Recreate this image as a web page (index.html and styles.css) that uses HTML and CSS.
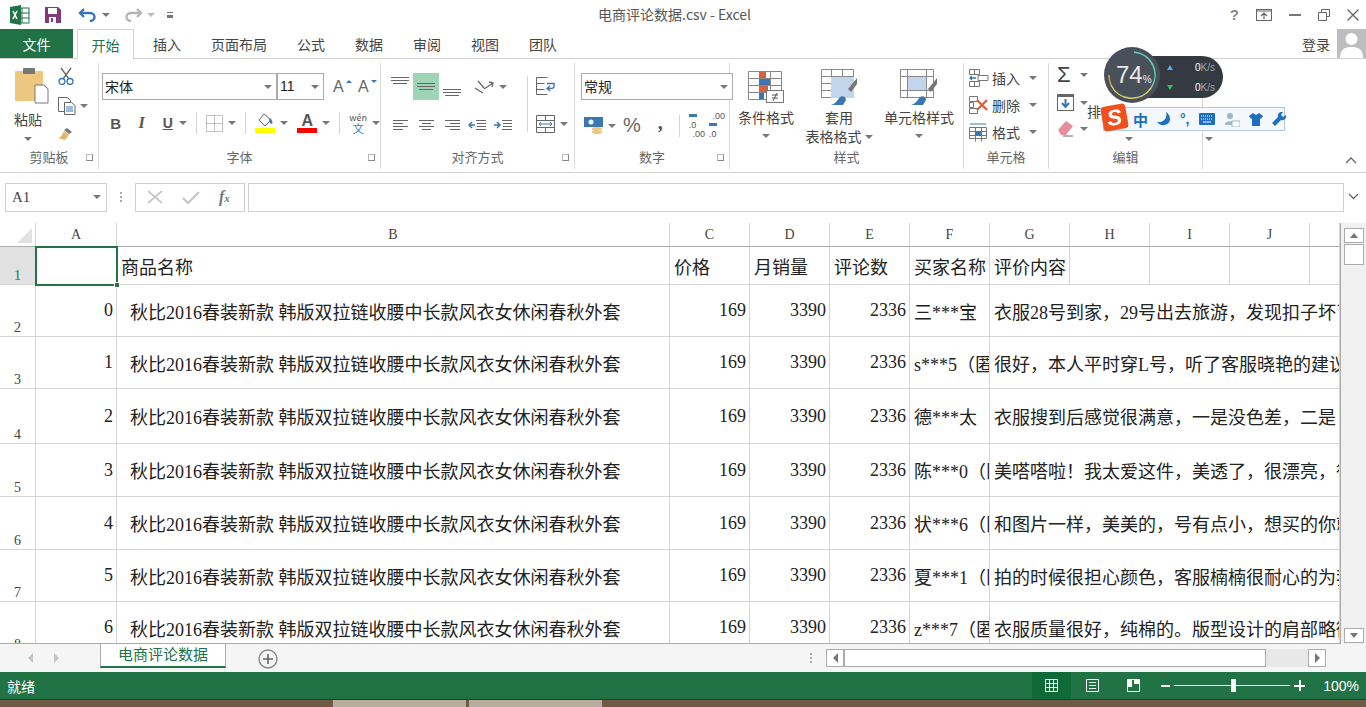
FILE: index.html
```html
<!DOCTYPE html>
<html lang="zh-CN">
<head>
    <meta charset="UTF-8">
    <title>电商评论数据.csv - Excel</title>
    <link rel="stylesheet" href="styles.css">
</head>
<body>
<div class="app">
    <div class="titlebar">
        <div class="qat">
            <svg class="ic" width="22" height="22" viewBox="0 0 22 22"><rect x="8" y="4" width="12" height="15" fill="#fff" stroke="#217346"/><path d="M13 4v15M8 9h12M8 14h12" stroke="#217346"/><path d="M1 3l11-2v20L1 19z" fill="#217346"/><path d="M4 7l4 8M8 7l-4 8" stroke="#fff" stroke-width="1.6"/></svg>
            <svg class="ic save" width="16" height="16" viewBox="0 0 16 16"><path d="M0 0h13l3 3v13H0z" fill="#80397b"/><rect x="3" y="1" width="9" height="6" fill="#fff"/><rect x="4" y="10" width="7" height="6" fill="#fff"/><rect x="6" y="11" width="2" height="4" fill="#80397b"/></svg>
            <svg class="ic undo" width="20" height="14" viewBox="0 0 20 14"><path d="M6 1L2 5l4 4" fill="none" stroke="#3a78b5" stroke-width="2.4"/><path d="M3 5h9c6 0 6 8 0 8" fill="none" stroke="#3a78b5" stroke-width="2.4"/></svg>
            <span class="caret"></span>
            <svg class="ic redo" width="20" height="14" viewBox="0 0 20 14"><path d="M14 1l4 4-4 4" fill="none" stroke="#b4b4b4" stroke-width="2.4"/><path d="M17 5H8c-6 0-6 8 0 8" fill="none" stroke="#b4b4b4" stroke-width="2.4"/></svg>
            <span class="caret light"></span>
            <span class="qat-more"></span>
        </div>
        <div class="title">电商评论数据.csv - Excel</div>
        <div class="winbtns">
            <span class="help">?</span>
            <svg width="16" height="12" viewBox="0 0 16 12"><rect x=".5" y=".5" width="15" height="11" fill="none" stroke="#666"/><path d="M1 2h14M8 10V4M5 7l3-3 3 3" fill="none" stroke="#666" stroke-width="1.2"/></svg>
            <svg width="12" height="2" viewBox="0 0 12 2"><rect width="12" height="2" fill="#777"/></svg>
            <svg width="12" height="12" viewBox="0 0 12 12"><path d="M3.500 3V.5h8v7H9M.5 3.500h8v8h-8z" fill="none" stroke="#666"/></svg>
            <svg width="12" height="12" viewBox="0 0 12 12"><path d="M.5.500l11 11M11.500.5l-11 11" stroke="#666" stroke-width="1.300"/></svg>
        </div>
    </div>

    <div class="tabs">
        <div class="tab file">文件</div>
        <div class="tab active">开始</div>
        <div class="tab">插入</div>
        <div class="tab">页面布局</div>
        <div class="tab">公式</div>
        <div class="tab">数据</div>
        <div class="tab">审阅</div>
        <div class="tab">视图</div>
        <div class="tab">团队</div>
        <div class="login">登录</div>
        <div class="avatar"><svg width="29" height="29" viewBox="0 0 29 29"><rect width="29" height="29" fill="#bdbdbd"/><circle cx="14.500" cy="10" r="6" fill="#fff"/><path d="M3 29c0-9 5-11 11.500-11S26 20 26 29z" fill="#fff"/></svg></div>
    </div>

    <div class="ribbon">
        <section class="group g-clip">
            <div class="group-body">
                <div class="paste">
                    <svg width="34" height="38" viewBox="0 0 34 38"><rect x="0" y="4" width="28" height="30" rx="1" fill="#edc77f"/><rect x="8" y="1" width="12" height="6" rx="1" fill="#777"/><path d="M20 18h9l4 4v14H20z" fill="#fff" stroke="#777"/></svg>
                    <span>粘贴</span>
                    <span class="caret"></span>
                </div>
                <div class="clip-tools">
                    <svg width="16" height="18" viewBox="0 0 16 18"><path d="M3 1l8 11M13 1L5 12" stroke="#666" stroke-width="1.300"/><circle cx="4" cy="14.500" r="3" fill="none" stroke="#3a78b5" stroke-width="1.300"/><circle cx="12" cy="14.500" r="3" fill="none" stroke="#3a78b5" stroke-width="1.300"/></svg>
                    <div class="row-c"><svg width="18" height="18" viewBox="0 0 18 18"><path d="M.5.500h9l3 3v11H.5z" fill="#fff" stroke="#666"/><path d="M6.500 5.500h7l3.500 3v9H6.500z" fill="#fff" stroke="#666"/><path d="M8 10h7M8 12h7M8 14h7" stroke="#3a78b5"/></svg><span class="caret"></span></div>
                    <svg width="16" height="14" viewBox="0 0 16 14"><path d="M9 1l5 4-3 2-5-4z" fill="#777"/><path d="M6 4l5 4-4 5-7-2c3 0 4-3 6-7z" fill="#e3b56a"/></svg>
                </div>
            </div>
            <div class="group-label">剪贴板<i class="launcher"></i></div>
        </section>

        <section class="group g-font">
            <div class="group-body stack">
                <div class="row-c">
                    <div class="combo name">宋体<span class="caret"></span></div>
                    <div class="combo size">11<span class="caret"></span></div>
                    <span class="grow-a">A<i class="up"></i></span>
                    <span class="grow-a small">A<i class="down"></i></span>
                </div>
                <div class="row-c fmt">
                    <b class="fb">B</b><i class="fi">I</i><u class="fu">U</u><span class="caret"></span>
                    <span class="vsep"></span>
                    <svg width="17" height="17" viewBox="0 0 17 17"><path d="M.5.500h16v16H.5zM8.500.5v16M.5 8.500h16" fill="none" stroke="#888" stroke-dasharray="1 1"/></svg><span class="caret"></span>
                    <span class="vsep"></span>
                    <span class="color-btn"><svg width="20" height="15" viewBox="0 0 20 15"><path d="M9 1l7 6-6 6-6-6z" fill="#fff" stroke="#666"/><path d="M14 5c3 1 4 4 3 6-2 0-3-3-3-6z" fill="#3a78b5"/></svg><em class="bar yellow"></em></span><span class="caret"></span>
                    <span class="color-btn letter"><span>A</span><em class="bar red"></em></span><span class="caret"></span>
                    <span class="vsep"></span>
                    <span class="wen"><span>wén</span><span>文</span></span><span class="caret"></span>
                </div>
            </div>
            <div class="group-label">字体<i class="launcher"></i></div>
        </section>

        <section class="group g-align">
            <div class="group-body">
                <div class="align-grid">
                    <span class="al"><svg width="18" height="8" viewBox="0 0 18 8"><path d="M0 .5h18M0 3.500h18M2 6.500h14" stroke="#666"/></svg></span>
                    <span class="al on"><svg width="18" height="8" viewBox="0 0 18 8"><path d="M0 .5h18M0 3.500h18M2 6.500h14" stroke="#666"/></svg></span>
                    <span class="al low"><svg width="18" height="8" viewBox="0 0 18 8"><path d="M0 .5h18M0 3.500h18M2 6.500h14" stroke="#666"/></svg></span>
                    <span class="al"><svg width="22" height="14" viewBox="0 0 22 14"><path d="M1 8l8 5M4 1l6 7M10 9l9-6M15 2l4 1-1 4" fill="none" stroke="#666" stroke-width="1.300"/></svg><span class="caret"></span></span>
                    <span class="al"><svg width="15" height="10" viewBox="0 0 15 10"><path d="M0 .5h15M0 3.500h10M0 6.500h15M0 9.500h10" stroke="#666"/></svg></span>
                    <span class="al"><svg width="15" height="10" viewBox="0 0 15 10"><path d="M0 .5h15M3 3.500h9M0 6.500h15M3 9.500h9" stroke="#666"/></svg></span>
                    <span class="al"><svg width="15" height="10" viewBox="0 0 15 10"><path d="M0 .5h15M5 3.500h10M0 6.500h15M5 9.500h10" stroke="#666"/></svg></span>
                    <span class="al pair"><svg width="18" height="10" viewBox="0 0 18 10"><path d="M8 .5h10M9 3.500h9M9 6.500h9M8 9.500h10" stroke="#666"/><path d="M7 5H1M4 2L1 5l3 3" fill="none" stroke="#3a78b5" stroke-width="1.500"/></svg><svg width="18" height="10" viewBox="0 0 18 10"><path d="M8 .5h10M9 3.500h9M9 6.500h9M8 9.500h10" stroke="#666"/><path d="M0 5h6M3 2l3 3-3 3" fill="none" stroke="#3a78b5" stroke-width="1.500"/></svg></span>
                </div>
                <span class="vsep tall"></span>
                <div class="wrap-tools">
                    <svg width="20" height="18" viewBox="0 0 20 18"><path d="M.5.500h11M.5 6.500h8M.5 12.500h8M.5.500v17h11" fill="none" stroke="#666"/><path d="M11 6.500h7v3c0 2-2 2-4 2h-2M14 9l-3 2.500 3 2.500" fill="none" stroke="#3a78b5" stroke-width="1.400"/></svg>
                    <div class="row-c"><svg width="19" height="18" viewBox="0 0 19 18"><path d="M.5.500h18v17H.5zM.5 5.500h18M.5 12.500h18M9.500.5v5M9.500 12.500v5" fill="none" stroke="#666"/><path d="M3 9h13M5 7L3 9l2 2M14 7l2 2-2 2" fill="none" stroke="#3a78b5"/></svg><span class="caret"></span></div>
                </div>
            </div>
            <div class="group-label">对齐方式<i class="launcher"></i></div>
        </section>

        <section class="group g-num">
            <div class="group-body stack">
                <div class="combo numfmt">常规<span class="caret"></span></div>
                <div class="row-c numrow">
                    <svg width="19" height="18" viewBox="0 0 19 18"><rect width="19" height="10" fill="#3a78b5"/><circle cx="7" cy="5" r="2.500" fill="#fff"/><ellipse cx="13" cy="12" rx="5" ry="2" fill="#edc77f"/><ellipse cx="13" cy="15" rx="5" ry="2" fill="#edc77f"/></svg><span class="caret"></span>
                    <span class="pct">%</span>
                    <span class="comma">,</span>
                    <span class="vsep"></span>
                    <span class="dec"><span><i class="l"></i>.0</span><span>.00</span></span>
                    <span class="dec"><span>.00</span><span><i class="r"></i>.0</span></span>
                </div>
            </div>
            <div class="group-label">数字<i class="launcher"></i></div>
        </section>

        <section class="group g-style">
            <div class="group-body big-row">
                <div class="big cond">
                    <svg width="36" height="32" viewBox="0 0 36 32"><path d="M.5.500h33v28H.5zM.5 7.500h33M.5 14.500h33M.5 21.500h33M11.500.5v28M22.500.5v28" fill="none" stroke="#888"/><rect x="11" y="1" width="7" height="6" fill="#d9603b"/><rect x="11" y="8" width="11" height="6" fill="#3a78b5"/><rect x="11" y="15" width="9" height="6" fill="#d9603b"/><rect x="11" y="22" width="5" height="6" fill="#3a78b5"/><rect x="18.500" y="19.500" width="17" height="12" fill="#fff" stroke="#777"/><path d="M24 24h6M24 27h6M29 22l-4 8" stroke="#555"/></svg>
                    <span>条件格式</span><span class="caret"></span>
                </div>
                <div class="big tbl">
                    <svg width="37" height="36" viewBox="0 0 37 36"><path d="M.5.500h32v28H.5zM.5 7.500h32M.5 14.500h32M.5 21.500h32M10.500.5v28M21.500.5v28" fill="none" stroke="#888"/><rect x="10" y="8" width="23" height="21" fill="#c3d5ea"/><path d="M27 20L36 9v6l-6 8z" fill="#777"/><path d="M10 36c4-1 6-4 9-8 3-2 6 0 6 3l-3 5z" fill="#3a78b5"/></svg>
                    <span>套用</span><span>表格格式<i class="caret inl"></i></span>
                </div>
                <div class="big cellst">
                    <svg width="38" height="36" viewBox="0 0 38 36"><path d="M.5.500h33v28H.5zM.5 7.500h33M.5 21.500h33M7.500.5v28M26.500.5v28" fill="none" stroke="#888"/><rect x="8" y="8" width="18" height="13" fill="#c3d5ea"/><path d="M28 20L37 9v6l-6 8z" fill="#777"/><path d="M11 36c4-1 6-4 9-8 3-2 6 0 6 3l-3 5z" fill="#3a78b5"/></svg>
                    <span>单元格样式</span><span class="caret"></span>
                </div>
            </div>
            <div class="group-label">样式</div>
        </section>

        <section class="group g-cells">
            <div class="group-body stack cells">
                <div class="row-c"><svg width="20" height="18" viewBox="0 0 20 18"><path d="M.5.500h10v5H.5zM.5 12.500h10v5H.5zM5.500.5v5M5.500 12.500v5M9 6.500h10v5H9z" fill="none" stroke="#777"/><path d="M7 9H1M3 7L1 9l2 2" fill="none" stroke="#3a78b5" stroke-width="1.300"/></svg><span class="lbl">插入</span><span class="caret"></span></div>
                <div class="row-c"><svg width="20" height="18" viewBox="0 0 20 18"><path d="M.5.500h8v5h-8zM.5 12.500h8v5h-8zM.5 6.500h4v5h-4z" fill="none" stroke="#777"/><path d="M8 4l10 10M18 4L8 14" stroke="#d9603b" stroke-width="2.200"/></svg><span class="lbl">删除</span><span class="caret"></span></div>
                <div class="row-c"><svg width="20" height="19" viewBox="0 0 20 19"><path d="M1 1h16" stroke="#3a78b5"/><path d="M.5 4.500h17v11H.5zM.5 8.500h17M.5 12.500h17M6.500 4.500v14M12.500 4.500v14" fill="none" stroke="#777"/><rect x="6" y="8" width="6" height="5" fill="#3a78b5"/></svg><span class="lbl">格式</span><span class="caret"></span></div>
            </div>
            <div class="group-label">单元格</div>
        </section>

        <section class="group g-edit">
            <div class="group-body edit">
                <div class="edit-col">
                    <div class="row-c"><span class="sigma">Σ</span><span class="caret"></span></div>
                    <div class="row-c"><svg width="17" height="17" viewBox="0 0 17 17"><rect x=".5" y=".5" width="16" height="16" fill="#fff" stroke="#666"/><rect x="1" y="1" width="15" height="2" fill="#666"/><path d="M8.500 5v8M5 9l3.500 4L12 9" fill="none" stroke="#3a78b5" stroke-width="2"/></svg><span class="caret"></span></div>
                    <div class="row-c"><svg width="17" height="17" viewBox="0 0 17 17"><path d="M1 10l8-9 7 5-7 9H4z" fill="#e88d9d"/><path d="M6 16h10" stroke="#666"/></svg><span class="caret"></span></div>
                </div>
                <div class="edit-rest">
                    <span class="edit-txt">排</span>
                    <span class="caret c1"></span>
                    <span class="caret c2"></span>
                </div>
            </div>
            <div class="group-label">编辑</div>
        </section>
        <svg class="collapse" width="12" height="7" viewBox="0 0 12 7"><path d="M1 6l5-5 5 5" fill="none" stroke="#666" stroke-width="1.300"/></svg>
    </div>

    <div class="formula">
        <div class="namebox">A1<span class="caret"></span></div>
        <span class="dots"></span>
        <div class="fx-btns">
            <svg width="16" height="14" viewBox="0 0 16 14"><path d="M1 1l14 12M15 1L1 13" stroke="#c8c8c8" stroke-width="1.700"/></svg>
            <svg width="18" height="14" viewBox="0 0 18 14"><path d="M1 8l5 5L17 2" fill="none" stroke="#c8c8c8" stroke-width="2.400"/></svg>
            <span class="fx">f<sub>x</sub></span>
        </div>
        <div class="fbar"></div>
        <svg class="fdown" width="11" height="7" viewBox="0 0 11 7"><path d="M1 1l4.500 4.500L10 1" fill="none" stroke="#666" stroke-width="1.300"/></svg>
    </div>

    <div class="sheet">
        <div class="grid-wrap">
            <table class="grid">
                <colgroup>
                    <col class="c-row"><col class="c-a"><col class="c-b"><col class="c-n"><col class="c-n"><col class="c-n"><col class="c-n"><col class="c-n"><col class="c-n"><col class="c-n"><col class="c-n"><col class="c-rest">
                </colgroup>
                <tr class="head"><th class="corner"><i></i></th><th class="sel">A</th><th>B</th><th>C</th><th>D</th><th>E</th><th>F</th><th>G</th><th>H</th><th>I</th><th>J</th><th></th></tr>
                <tr class="r1"><th class="sel rn">1</th><td></td><td>商品名称</td><td>价格</td><td>月销量</td><td>评论数</td><td>买家名称</td><td>评价内容</td><td></td><td></td><td></td><td></td></tr>
                <tr class="r52"><th class="rn">2</th><td class="n">0</td><td class="goods">秋比2016春装新款 韩版双拉链收腰中长款风衣女休闲春秋外套</td><td class="n">169</td><td class="n">3390</td><td class="n">2336</td><td>三***宝（</td><td colspan="5">衣服28号到家，29号出去旅游，发现扣子坏了</td></tr>
                <tr class="r52"><th class="rn">3</th><td class="n">1</td><td class="goods">秋比2016春装新款 韩版双拉链收腰中长款风衣女休闲春秋外套</td><td class="n">169</td><td class="n">3390</td><td class="n">2336</td><td>s***5（匿</td><td colspan="5">很好，本人平时穿L号，听了客服晓艳的建议</td></tr>
                <tr class="r55"><th class="rn">4</th><td class="n">2</td><td class="goods">秋比2016春装新款 韩版双拉链收腰中长款风衣女休闲春秋外套</td><td class="n">169</td><td class="n">3390</td><td class="n">2336</td><td>德***太（</td><td colspan="5">衣服搜到后感觉很满意，一是没色差，二是</td></tr>
                <tr class="r53"><th class="rn">5</th><td class="n">3</td><td class="goods">秋比2016春装新款 韩版双拉链收腰中长款风衣女休闲春秋外套</td><td class="n">169</td><td class="n">3390</td><td class="n">2336</td><td>陈***0（匿</td><td colspan="5">美嗒嗒啦！我太爱这件，美透了，很漂亮，很</td></tr>
                <tr class="r53"><th class="rn">6</th><td class="n">4</td><td class="goods">秋比2016春装新款 韩版双拉链收腰中长款风衣女休闲春秋外套</td><td class="n">169</td><td class="n">3390</td><td class="n">2336</td><td>状***6（匿</td><td colspan="5">和图片一样，美美的，号有点小，想买的你就</td></tr>
                <tr class="r52"><th class="rn">7</th><td class="n">5</td><td class="goods">秋比2016春装新款 韩版双拉链收腰中长款风衣女休闲春秋外套</td><td class="n">169</td><td class="n">3390</td><td class="n">2336</td><td>夏***1（匿</td><td colspan="5">拍的时候很担心颜色，客服楠楠很耐心的为我</td></tr>
                <tr class="r52"><th class="rn">8</th><td class="n">6</td><td class="goods">秋比2016春装新款 韩版双拉链收腰中长款风衣女休闲春秋外套</td><td class="n">169</td><td class="n">3390</td><td class="n">2336</td><td>z***7（匿</td><td colspan="5">衣服质量很好，纯棉的。版型设计的肩部略微</td></tr>
            </table>
            <div class="selection"><i></i></div>
        </div>
        <div class="vscroll">
            <span class="sbtn"><i class="tri up"></i></span>
            <span class="thumb"></span>
            <span class="sbtn bottom"><i class="tri down"></i></span>
        </div>
    </div>

    <div class="sheetbar">
        <div class="nav"><i class="tri left"></i><i class="tri right"></i></div>
        <div class="sheet-tab">电商评论数据</div>
        <svg class="add" width="20" height="20" viewBox="0 0 20 20"><circle cx="10" cy="10" r="9" fill="none" stroke="#888" stroke-width="1.400"/><path d="M10 5v10M5 10h10" stroke="#666" stroke-width="1.600"/></svg>
        <span class="dots right"></span>
        <div class="hscroll">
            <span class="sbtn"><i class="tri left dark"></i></span>
            <span class="hthumb"></span>
            <span class="sbtn end"><i class="tri right dark"></i></span>
        </div>
    </div>

    <div class="status">
        <span>就绪</span>
        <div class="status-right">
            <span class="view on"><svg width="13" height="13" viewBox="0 0 13 13"><path d="M.5.500h12v12H.5zM.5 4.500h12M.5 8.500h12M4.500.5v12M8.500.5v12" fill="none" stroke="#fff"/></svg></span>
            <span class="view"><svg width="13" height="13" viewBox="0 0 13 13"><path d="M.5.500h12v12H.5z" fill="none" stroke="#fff"/><path d="M3 3.500h7M3 6.500h7M3 9.500h7" stroke="#fff"/></svg></span>
            <span class="view"><svg width="13" height="13" viewBox="0 0 13 13"><path d="M.5.500h12v12H.5z" fill="none" stroke="#fff"/><path d="M1 1h4v7H1zM7 1h5v4H7z" fill="#fff"/></svg></span>
            <div class="zoom"><span class="zm"></span><div class="track"><i></i></div><span class="zp"></span></div>
            <span class="pctz">100%</span>
        </div>
    </div>

    <div class="taskbar">
        <span class="task w1"></span>
        <span class="task w2"></span>
        <span class="task w3"></span>
        <span class="task w4"></span>
    </div>

    <div class="meter">
        <div class="speed">
            <div class="sp"><i class="ar up"></i><b>0</b><span>K/s</span></div>
            <div class="sp"><i class="ar dn"></i><b>0</b><span>K/s</span></div>
        </div>
        <div class="dial"><svg width="58" height="58" viewBox="0 0 58 58"><circle cx="29" cy="29" r="28" fill="#4a505a"/><path d="M31 6a23 23 0 0 1 17 36" fill="none" stroke="#5fd6b8" stroke-width="1.400"/><path d="M48 42a23 23 0 0 1-40-3" fill="none" stroke="#d8d864" stroke-width="1.400"/><path d="M8 39a23 23 0 0 1-2-10" fill="none" stroke="#e0a040" stroke-width="1.400"/></svg><span class="dial-num">74<small>%</small></span></div>
    </div>

    <div class="ime">
        <span class="ime-s">S</span>
        <span class="ime-cn">中</span>
        <svg width="14" height="14" viewBox="0 0 14 14"><path d="M9 0c2 6-3 11-9 10 3 5 13 4 13-3 0-3-2-6-4-7z" fill="#1d6fc0"/></svg>
        <span class="ime-p">°,</span>
        <svg width="16" height="12" viewBox="0 0 16 12"><rect width="16" height="12" rx="1" fill="#1d6fc0"/><path d="M2 3h12M2 6h12" stroke="#fff" stroke-dasharray="1 1"/><path d="M4 9h8" stroke="#fff"/></svg>
        <svg width="16" height="15" viewBox="0 0 16 15"><circle cx="6" cy="4" r="3" fill="#9fb6cc"/><path d="M1 13c0-5 9-5 10 0z" fill="#9fb6cc"/><rect x="8" y="9" width="8" height="6" fill="#fff" stroke="#9fb6cc"/></svg>
        <svg width="14" height="13" viewBox="0 0 14 13"><path d="M4 0l3 2 3-2 4 3-2 3-1-1v8H3V5L2 6 0 3z" fill="#1d6fc0"/></svg>
        <svg width="14" height="14" viewBox="0 0 14 14"><path d="M14 3l-3 2-2-2 2-3c-3-1-6 2-5 5L0 11l3 3 6-6c3 1 6-2 5-5z" fill="#1d6fc0"/></svg>
    </div>
</div>
</body>
</html>
```

FILE: styles.css
```css
* { margin: 0; padding: 0; box-sizing: border-box; }
html, body { height: 100%; overflow: hidden; }
body { font-family: "Noto Sans CJK SC", "Liberation Sans", sans-serif; font-size: 14px; color: #444; background: #fff; }
.app { position: relative; width: 1366px; height: 707px; display: flex; flex-direction: column; overflow: hidden; }
svg { display: block; flex: none; }

.caret { display: inline-block; width: 0; height: 0; border-left: 4px solid transparent; border-right: 4px solid transparent; border-top: 4px solid #777; flex: none; }
.caret.light { border-top-color: #bbb; }
.row-c { display: flex; align-items: center; }
.vsep { display: block; width: 1px; height: 22px; background: #d4d4d4; flex: none; }

/* title bar */
.titlebar { height: 29px; display: flex; align-items: center; position: relative; flex: none; }
.qat { display: flex; align-items: center; padding-left: 9px; }
.qat .save { margin-left: 14px; }
.qat .undo { margin-left: 17px; }
.qat .caret { margin-left: 4px; }
.qat .redo { margin-left: 13px; }
.qat-more { width: 6px; height: 6px; margin-left: 12px; border-top: 1px solid #777; border-bottom: 3px solid #777; }
.title { position: absolute; left: 598px; top: 4px; font-size: 14px; line-height: 20px; color: #555; }
.winbtns { margin-left: auto; display: flex; align-items: center; gap: 0; padding-right: 7px; }
.winbtns > * { margin-left: 17px; }
.help { font: bold 15px "Liberation Sans", sans-serif; color: #888; }

/* tabs */
.tabs { height: 30px; display: flex; align-items: stretch; border-bottom: 1px solid #d2d2d2; flex: none; }
.tab { font-size: 14px; line-height: 30px; padding: 0 15px; color: #444; }
.tab.file { width: 73px; padding: 0; text-align: center; background: #217346; color: #fff; }
.tab.active { width: 57px; margin: 0 4px 0 4px; padding: 0; text-align: center; height: 30px; color: #217346; background: #fff; border: 1px solid #d2d2d2; border-bottom: 0; }
.login { margin-left: auto; font-size: 14px; line-height: 30px; margin-right: 7px; }
.avatar { width: 29px; height: 29px; }

/* ribbon */
.ribbon { height: 114px; display: flex; position: relative; border-bottom: 1px solid #d2d2d2; flex: none; padding-top: 4px; }
.group { display: flex; flex-direction: column; border-right: 1px solid #d8d8d8; height: 106px; position: relative; flex: none; }
.group-body { flex: 1; display: flex; min-height: 0; }
.group-label { height: 22px; line-height: 20px; font-size: 13px; color: #666; text-align: center; position: relative; }
.launcher { position: absolute; right: 5px; top: 7px; width: 7px; height: 7px; border: 1px solid #888; border-top-color: #bbb; border-left-color: #bbb; }
.stack { flex-direction: column; }

.g-clip { width: 99px; }
.g-clip .group-body { padding: 4px 0 0 15px; }
.paste { width: 40px; display: flex; flex-direction: column; align-items: flex-start; font-size: 14px; }
.paste span:not(.caret) { line-height: 24px; margin: 2px 0 0 -1px; color: #444; }
.paste .caret { margin: 6px 0 0 9px; }
.clip-tools { margin-left: 3px; display: flex; flex-direction: column; gap: 12px; align-items: flex-start; }
.clip-tools .caret { margin-left: 4px; }

.g-font { width: 282px; }
.g-font .group-body { padding: 10px 0 0 3px; gap: 12px; }
.combo { height: 27px; border: 1px solid #ababab; font-size: 14px; line-height: 25px; position: relative; padding-left: 2px; color: #222; background: #fff; }
.combo .caret { position: absolute; right: 4px; top: 11px; }
.combo.name { width: 175px; }
.combo.size { width: 47px; font-family: "Liberation Sans", sans-serif; }
.grow-a { position: relative; margin-left: 9px; font: 16px "Liberation Sans", sans-serif; color: #666; width: 16px; }
.grow-a.small { margin-left: 9px; }
.grow-a i { position: absolute; right: -3px; width: 0; height: 0; border-left: 3px solid transparent; border-right: 3px solid transparent; }
.grow-a i.up { top: 2px; border-bottom: 3px solid #3a78b5; }
.grow-a i.down { top: 2px; border-top: 3px solid #3a78b5; }
.fmt { padding-left: 7px; }
.fmt > .caret { margin-left: 5px; }
.fmt .vsep { margin: 0 9px; }
.fb, .fi, .fu { font: 16px "Liberation Serif", serif; width: 15px; color: #555; margin-right: 13px; text-align: center; }
.fb { font: bold 15px "Liberation Sans", sans-serif; }
.fi { font: italic bold 16px "Liberation Serif", serif; }
.fu { margin-right: 0; font: bold 14px "Liberation Sans", sans-serif; }
.color-btn { display: flex; flex-direction: column; width: 20px; align-items: center; gap: 0; }
.color-btn + .caret + .color-btn { margin-left: 9px; }
.color-btn.letter span { font: bold 16px/15px "Liberation Sans", sans-serif; color: #555; }
.bar { display: block; width: 20px; height: 5px; }
.bar.yellow { background: #ffff00; }
.bar.red { background: #ff0000; }
.wen { display: flex; flex-direction: column; align-items: center; font-size: 9px; line-height: 10px; color: #555; }
.wen span + span { color: #3a78b5; font-size: 11px; line-height: 11px; }

.g-align { width: 194px; }
.g-align .group-body { padding: 10px 0 0 6px; }
.align-grid { display: grid; grid-template-columns: 26px 26px 26px 50px; grid-template-rows: 27px 27px; row-gap: 11px; width: 132px; }
.al { display: flex; align-items: center; justify-content: center; gap: 3px; }
.al.on { background: #9fd5b7; align-items: center; }
.al.low { align-items: flex-end; padding-bottom: 3px; }
.al:first-child { align-items: flex-start; padding-top: 4px; }
.al.pair { gap: 8px; }
.vsep.tall { height: 56px; margin: 3px 8px 0 8px; }
.wrap-tools { display: flex; flex-direction: column; gap: 20px; padding-top: 4px; }
.wrap-tools .caret { margin-left: 5px; }

.g-num { width: 155px; }
.g-num .group-body { padding: 10px 0 0 6px; gap: 12px; }
.combo.numfmt { width: 152px; width: 152px; }
.numrow { padding-left: 3px; }
.numrow .caret { margin-left: 5px; }
.pct { font: 20px "Liberation Sans", sans-serif; color: #666; margin-left: 7px; }
.comma { font: bold 20px "Liberation Serif", serif; color: #555; margin: -6px 0 0 17px; }
.numrow .vsep { margin: 0 9px 0 16px; }
.dec { display: flex; flex-direction: column; font: 9px/9px "Liberation Sans", sans-serif; color: #555; width: 26px; align-items: flex-end; padding-right: 4px; }
.dec i { display: inline-block; width: 8px; height: 3px; background: #3a78b5; margin-right: 1px; vertical-align: 2px; }

.g-style { width: 234px; }
.big-row { padding: 6px 0 0 5px; gap: 6px; }
.big { display: flex; flex-direction: column; align-items: center; font-size: 14px; line-height: 19px; color: #444; }
.big svg { height: 36px; margin-bottom: 3px; }
.big .caret { margin-top: 7px; }
.big .caret.inl { margin: 0 0 2px 3px; vertical-align: middle; }
.cond { width: 62px; }
.tbl { width: 72px; }
.cellst { width: 76px; }

.g-cells { width: 85px; }
.cells { padding: 5px 0 0 5px; gap: 7px; }
.cells .lbl { margin-left: 3px; color: #444; line-height: 20px; }
.cells .caret { margin-left: 9px; }

.g-edit { width: 154px; }
.edit { padding: 2px 0 0 8px; position: relative; }
.edit-col { display: flex; flex-direction: column; gap: 9px; }
.edit-col .caret { margin-left: 6px; }
.sigma { font: 22px/20px "Liberation Sans", sans-serif; width: 17px; color: #444; }
.edit-txt { position: absolute; left: 38px; top: 38px; }
.edit-rest .caret { position: absolute; top: 74px; }
.c1 { left: 76px; }
.c2 { left: 156px; }
.collapse { position: absolute; right: 9px; bottom: 8px; }

/* formula bar */
.formula { height: 50px; display: flex; align-items: center; padding: 0 0 2px 5px; background: #fff; flex: none; position: relative; }
.namebox { width: 102px; height: 29px; border: 1px solid #d0d0d0; font: 15px/27px "Liberation Serif", serif; padding-left: 6px; position: relative; color: #444; }
.namebox .caret { position: absolute; right: 5px; top: 11px; }
.dots { width: 2px; height: 10px; margin: 0 13px 0 13px; background: repeating-linear-gradient(#aaa 0 2px, transparent 2px 4px); flex: none; }
.fx-btns { width: 110px; height: 29px; border: 1px solid #d0d0d0; display: flex; align-items: center; gap: 19px; padding-left: 11px; }
.fx { font: italic bold 16px "Liberation Serif", serif; color: #777; }
.fx sub { font-size: 11px; vertical-align: baseline; }
.fbar { flex: 1; height: 29px; margin-left: 3px; margin-right: 22px; border: 1px solid #d0d0d0; }
.fdown { position: absolute; right: 7px; top: 20px; }

/* grid */
.sheet { height: 421px; display: flex; flex: none; position: relative; }
.grid-wrap { width: 1341px; border-right: 1px solid #ababab; border-bottom: 1px solid #ababab; overflow: hidden; position: relative; }
.grid { border-collapse: separate; border-spacing: 0; table-layout: fixed; width: 1340px; font: 15.600px "Liberation Serif", "Noto Sans CJK SC", serif; color: #222; }
.c-row { width: 36px; }
.c-a { width: 81px; }
.c-b { width: 553px; }
.c-n { width: 80px; }
.c-rest { width: 30px; }
.grid th, .grid td { border-right: 1px solid #d4d4d4; border-bottom: 1px solid #d4d4d4; overflow: hidden; white-space: nowrap; padding: 0 3px 0 4px; font-weight: 400; }
.grid tr.head th { height: 24px; background: #fff; font: 14px "Liberation Serif", serif; color: #444; text-align: center; border-bottom: 1px solid #ababab; padding: 0; }
.grid th.sel { background: #dfdfdf; color: #217346; }
.grid th.rn { background: #fff; font: 14px "Liberation Serif", serif; color: #444; text-align: center; vertical-align: bottom; padding: 0; }
.grid th.rn.sel { background: #e1e1e1; color: #217346; }
.corner { position: relative; }
.corner i { position: absolute; right: 3px; bottom: 3px; border-left: 15px solid transparent; border-bottom: 15px solid #e2e2e2; }
.grid td { font-size: 18px; }
.grid td.n { text-align: right; padding-right: 3px; }
.grid td.goods { padding-left: 13px; }
.r1 td, .r1 th { height: 38px; }
.r52 td, .r52 th { height: 52px; }
.r55 td, .r55 th { height: 55px; }
.r53 td, .r53 th { height: 53px; }
.selection { position: absolute; left: 35px; top: 23px; width: 83px; height: 40px; border: 2px solid #217346; }
.selection i { position: absolute; right: -4px; bottom: -4px; width: 6px; height: 6px; background: #217346; border: 1px solid #fff; }

.vscroll { width: 25px; position: relative; background: #f0f0f0; }
.sbtn { display: flex; align-items: center; justify-content: center; width: 20px; height: 15px; background: #fff; border: 1px solid #ababab; }
.vscroll .sbtn { position: absolute; left: 3px; top: 5px; }
.vscroll .sbtn.bottom { top: auto; bottom: 1px; }
.thumb { position: absolute; left: 3px; top: 21px; width: 20px; height: 21px; background: #fff; border: 1px solid #ababab; }
.tri { display: block; width: 0; height: 0; }
.tri.up { border-left: 4px solid transparent; border-right: 4px solid transparent; border-bottom: 5px solid #777; }
.tri.down { border-left: 4px solid transparent; border-right: 4px solid transparent; border-top: 5px solid #777; }
.tri.left { border-top: 5px solid transparent; border-bottom: 5px solid transparent; border-right: 5px solid #c4c4c4; }
.tri.right { border-top: 5px solid transparent; border-bottom: 5px solid transparent; border-left: 5px solid #c4c4c4; }
.tri.left.dark { border-right-color: #777; }
.tri.right.dark { border-left-color: #777; }

/* sheet tabs */
.sheetbar { height: 28px; display: flex; align-items: flex-start; background: #f5f5f5; flex: none; }
.nav { display: flex; gap: 21px; width: 100px; padding: 9px 0 0 28px; }
.sheet-tab { width: 126px; height: 24px; background: #fff; border: 1px solid #ababab; border-top: 0; border-bottom: 2px solid #217346; color: #217346; font-size: 15px; line-height: 20px; text-align: center; }
.add { margin: 5px 0 0 32px; }
.dots.right { margin: 9px 0 0 532px; height: 10px; }
.hscroll { margin: 5px 0 0 14px; width: 500px; height: 18px; display: flex; background: #e8e8e8; position: relative; }
.hscroll .sbtn { height: 18px; width: 18px; }
.hscroll .sbtn.end { position: absolute; right: 0; top: 0; }
.hthumb { width: 422px; height: 18px; background: #fff; border: 1px solid #ababab; margin-left: 0; }

/* status bar */
.status { height: 27px; background: #217346; color: #fff; display: flex; align-items: center; padding-left: 7px; font-size: 14px; flex: none; }
.status-right { margin-left: auto; display: flex; align-items: center; height: 27px; padding-right: 7px; }
.view { width: 39px; height: 27px; display: flex; align-items: center; justify-content: center; margin-right: 2px; }
.view.on { background: #0f6a38; }
.zoom { display: flex; align-items: center; margin-left: 6px; gap: 4px; }
.zm { width: 9px; height: 2px; background: #fff; }
.zp { width: 11px; height: 11px; background: linear-gradient(#fff, #fff) center/11px 2px no-repeat, linear-gradient(#fff, #fff) center/2px 11px no-repeat; }
.track { width: 116px; height: 1px; background: #fff; position: relative; margin: 0; }
.track i { position: absolute; left: 57px; top: -6px; width: 5px; height: 13px; background: #fff; }
.pctz { font: 14px "Liberation Sans", sans-serif; margin-left: 18px; }

/* desktop strip under the window */
.taskbar { height: 9px; flex: none; display: flex; background: #6f5a46; border-top: 1px solid #333; }
.task { height: 8px; display: block; margin-right: 3px; background: #b8aea0; }
.w1 { width: 330px; background: #6f5a46; }
.w2 { width: 133px; }
.w3 { width: 133px; }
.w4 { width: 180px; background: #6f5a46; }

/* overlays from other programs sitting on top of Excel */
.meter { position: absolute; left: 1103px; top: 46px; width: 122px; height: 65px; }
.speed { position: absolute; left: 40px; top: 10px; width: 80px; height: 42px; background: rgba(38,42,52,.93); border-radius: 0 21px 21px 0; padding: 1px 8px 0 24px; }
.sp { display: flex; align-items: center; height: 20px; font: 10px "Liberation Sans", sans-serif; color: #9aa; }
.sp b { margin-left: auto; color: #fff; font-weight: 400; }
.ar { width: 0; height: 0; border-left: 3px solid transparent; border-right: 3px solid transparent; }
.ar.up { border-bottom: 5px solid #4db3e8; }
.ar.dn { border-top: 5px solid #35c24a; }
.dial { position: absolute; left: 0; top: 0; width: 58px; height: 58px; }
.dial-num { position: absolute; left: 13px; top: 14px; font: 24px/30px "Liberation Sans", sans-serif; color: #e6e8ea; }
.dial-num small { font-size: 10px; }
.ime { position: absolute; left: 1103px; top: 107px; width: 182px; height: 24px; display: flex; align-items: center; gap: 9px; background: #f4f8fc; border: 1px solid #b4c8dc; padding-left: 29px; }
.ime-s { position: absolute; left: -2px; top: -3px; width: 25px; height: 25px; background: #f0501e; color: #fff; font: italic bold 22px/25px "Liberation Sans", sans-serif; text-align: center; border-radius: 4px; transform: rotate(-10deg); }
.ime-cn { color: #1d6fc0; font-size: 15px; font-weight: 700; }
.ime-p { color: #1d6fc0; font: bold 14px "Liberation Sans", sans-serif; }
```
